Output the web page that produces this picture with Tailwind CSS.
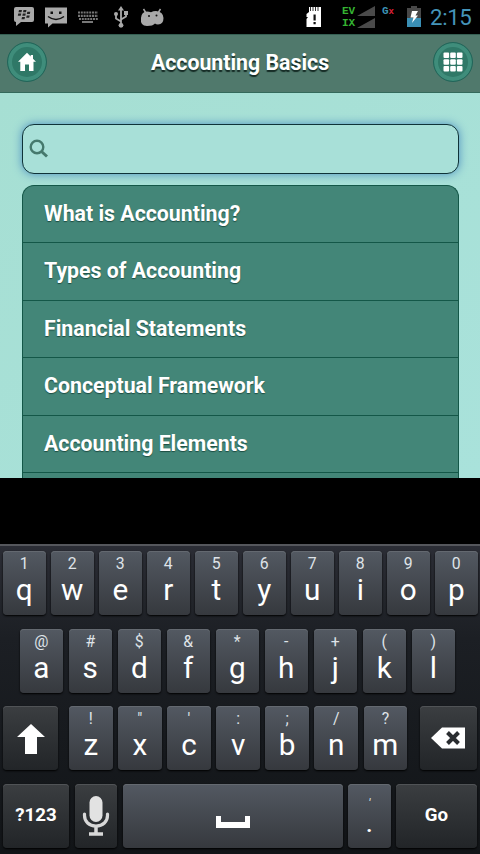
<!DOCTYPE html>
<html lang="en">
<head>
<meta charset="utf-8">
<title>Accounting Basics</title>
<script src="https://cdn.jsdelivr.net/npm/@tailwindcss/browser@4"></script>
</head>
<body class="w-[480px] h-[854px] overflow-hidden bg-black font-['Roboto','Liberation_Sans',sans-serif] text-white flex flex-col">

<!-- Status bar -->
<div class="h-[34px] shrink-0 flex items-center justify-between pl-[13px] pr-[8px]">
  <div class="flex items-center text-[#a9a9a9]">
    <svg class="w-[22px] h-[22px]" viewBox="0 0 22 22"><path fill="currentColor" d="M3 1h16q2 0 2 2v11q0 2-2 2H8l-5 4v-4q-2 0-2-2V3q0-2 2-2z"/><g fill="#222"><path d="M6 4h3l-.5 2.200H5.500zM10.500 4h3l-.5 2.200H10zM5.300 7.500h3l-.5 2.200H4.800zM9.800 7.500h3l-.5 2.200H9.300zM14.300 5.700h3l-.5 2.200h-3zM13.700 9.500h3l-.5 2.200h-3zM9 11h3l-.5 2.200H8.500z"/></g></svg>
    <svg class="ml-[9px] w-[24px] h-[22px]" viewBox="0 0 24 22"><path fill="currentColor" d="M1 1.500h22v16H8.500l-4.500 4v-4H1z"/><g fill="#111"><rect x="6.500" y="5.500" width="2.500" height="2.500"/><rect x="15" y="5.500" width="2.500" height="2.500"/></g><path d="M4 10.500q8 6 16 0" fill="none" stroke="#111" stroke-width="1.500"/></svg>
    <svg class="ml-[9px] w-[22px] h-[14px]" viewBox="0 0 22 14"><path d="M1 2.500h20M1 5.800h20M2 9h19" stroke="currentColor" stroke-width="2.200" stroke-dasharray="2 .8" opacity=".7"/><path d="M5 12h11" stroke="currentColor" stroke-width="1.800" opacity=".8"/></svg>
    <svg class="ml-[14px] w-[16px] h-[22px]" viewBox="0 0 16 22" fill="none" stroke="currentColor" stroke-width="1.800"><path d="M8 3v16M8 15.500l-5-3V8M8 13.500l5-3V7"/><path fill="currentColor" stroke="none" d="M8 0l3 4.500H5z"/><circle cx="8" cy="19.300" r="2.400" fill="currentColor" stroke="none"/><circle cx="3" cy="8" r="2" fill="currentColor" stroke="none"/><path fill="currentColor" stroke="none" d="M11 5h4v4h-4z"/></svg>
    <svg class="ml-[11px] w-[24px] h-[19px]" viewBox="0 0 24 19"><path d="M3.500 1l2.500 4M20.500 1L18 5" stroke="currentColor" stroke-width="1.500"/><path fill="currentColor" d="M1 10Q1.500 3.500 7 3.500q2 0 4 .8Q13 3 16 3q7 .5 7.500 7 0 6-5.500 6.500-2 0-3-1Q13 18 7 18 0 18 1 10z"/><circle cx="9" cy="8" r="1" fill="#111"/><circle cx="16.500" cy="7.500" r="1" fill="#111"/></svg>
  </div>
  <div class="flex items-center">
    <svg class="w-[16px] h-[22px]" viewBox="0 0 16 22"><path fill="#fff" d="M3 1h12v20H.500v-8L2 11H.500V8L3 6z"/><path d="M4.500 1v4M7 1v4M9.500 1v4M12 1v4" stroke="#333" stroke-width="1"/><path d="M7.500 8.500h2.200v6H7.500zM7.500 16h2.200v2.300H7.500z" fill="#111"/></svg>
    <div class="ml-[20px] w-[13px] text-[11px] leading-[12px] font-bold text-[#35b432] text-right font-['Liberation_Mono',monospace]">EV<br>IX</div>
    <svg class="ml-[2px] w-[19px] h-[24px]" viewBox="0 0 19 24"><path fill="#4a4a4a" d="M18 1v10H0zM18 13v10H0z"/></svg>
    <div class="ml-[6px] mb-[12px] w-[13px] text-[11px] leading-[10px] font-bold text-[#3c92b5] whitespace-nowrap font-['Liberation_Mono',monospace]">G<span class="text-[9px] text-[#e0203a]">x</span></div>
    <svg class="ml-[11px] w-[16px] h-[22px]" viewBox="0 0 16 22"><path fill="#484848" d="M5 0h6v2h4v10H1V2h4z"/><path fill="#3a8fb5" d="M1 12h14v9H1z"/><path fill="#fff" d="M6 5h6l-2.500 4.500H12L6 17l1.500-5.500H4.500z"/></svg>
    <div class="ml-[8px] w-[42px] text-[22.300px] leading-[34px] text-[#4594b8] tracking-[-0.400px] whitespace-nowrap">2:15</div>
  </div>
</div>

<!-- App header -->
<header class="h-[59px] shrink-0 bg-[#50796c] border-t border-b border-t-[#355f53] border-b-[#34695b] flex items-center justify-between px-[7px] pb-[3px]">
  <div class="w-[40px] h-[40px] rounded-full bg-[#2f7867] border-[1.500px] border-[#22665a] shadow-[inset_0_0_0_4px_#3f8d7b] flex items-center justify-center">
    <svg class="w-[20px] h-[20px]" viewBox="0 0 20 20" fill="#fff"><path d="M10 .8L1 9.700h2.300V19H8v-6.500h4V19h4.500V9.700H19L16 6.700V3h-2.300v1.500z"/></svg>
  </div>
  <h1 class="pt-[2px] text-[21.300px] font-bold whitespace-nowrap [text-shadow:0_2px_1px_#152b25]">Accounting Basics</h1>
  <div class="w-[40px] h-[40px] rounded-full bg-[#2f7867] border-[1.500px] border-[#22665a] shadow-[inset_0_0_0_4px_#3f8d7b] flex items-center justify-center">
    <svg class="w-[20px] h-[20px]" viewBox="0 0 20 20" fill="#fff"><rect x=".5" y=".5" width="5.600" height="5.600" rx="1"/><rect x="7.200" y=".5" width="5.600" height="5.600" rx="1"/><rect x="13.900" y=".5" width="5.600" height="5.600" rx="1"/><rect x=".5" y="7.200" width="5.600" height="5.600" rx="1"/><rect x="7.200" y="7.200" width="5.600" height="5.600" rx="1"/><rect x="13.900" y="7.200" width="5.600" height="5.600" rx="1"/><rect x=".5" y="13.900" width="5.600" height="5.600" rx="1"/><rect x="7.200" y="13.900" width="5.600" height="5.600" rx="1"/><rect x="13.900" y="13.900" width="5.600" height="5.600" rx="1"/></svg>
  </div>
</header>

<!-- Page content -->
<main class="h-[385px] shrink-0 overflow-hidden bg-linear-to-br from-[#a6dfd3] to-[#a9e2db] pt-[31px] pl-[22px] pr-[21px]">
  <div class="h-[50px] rounded-[12px] border-[1.500px] border-[#0f3338] bg-[#a8e0d8] shadow-[0_0_10px_#4d8fc0] pl-[6px] flex items-center">
    <svg class="w-[20px] h-[20px]" viewBox="0 0 20 20" fill="none" stroke="#45796d" stroke-width="2.400"><circle cx="8" cy="8" r="6.300"/><path d="M12.500 12.500l5.500 5" stroke-width="3"/></svg>
  </div>
  <ul class="mt-[11px] rounded-t-[12px] border border-b-0 border-[#145748] bg-[#438678] text-[21.300px] font-bold [&>li]:h-[57.400px] [&>li]:pl-[21px] [&>li]:leading-[56px] [&>li]:border-b-[1.500px] [&>li]:border-[#145748] [text-shadow:0_1px_1px_#1d4d42]">
    <li>What is Accounting?</li>
    <li>Types of Accounting</li>
    <li>Financial Statements</li>
    <li>Conceptual Framework</li>
    <li>Accounting Elements</li>
    <li></li>
  </ul>
</main>

<!-- Keyboard -->
<section class="mt-[66px] h-[310px] shrink-0 border-t-2 border-[#55575c] bg-linear-to-b from-[#2b2d35] via-[#1c1f24] via-30% to-[#111417] pt-[5px] flex flex-col gap-[13.500px]">
  <div id="row1" class="h-[64px] shrink-0 pl-[3px] flex gap-[5.500px]"></div>
  <div id="row2" class="h-[64px] shrink-0 pl-[19.500px] flex gap-[5.500px]"></div>
  <div class="h-[64px] shrink-0 pl-[3px] flex">
    <div class="w-[55px] rounded-[4px] bg-linear-to-b from-[#3b3e41] to-[#222528] shadow-[0_1px_2px_#000,inset_0_1px_0_#505356] flex items-center justify-center">
      <svg class="w-[28px] h-[30px] mt-[2px]" viewBox="0 0 28 30" fill="#fff"><path d="M14 0l14 13h-8v17H8V13H0z"/></svg>
    </div>
    <div id="row3" class="ml-[11px] flex gap-[5.500px]"></div>
    <div class="ml-[12.500px] w-[57px] rounded-[4px] bg-linear-to-b from-[#3b3e41] to-[#222528] shadow-[0_1px_2px_#000,inset_0_1px_0_#505356] flex items-center justify-center">
      <svg class="w-[34px] h-[22px]" viewBox="0 0 34 22"><path fill="#fff" d="M11 .500h23v21H11L0 11z"/><path d="M16.500 5.500l11 11M27.500 5.500l-11 11" stroke="#2a2d30" stroke-width="4"/></svg>
    </div>
  </div>
  <div class="h-[64px] shrink-0 pl-[3px] flex gap-[5.500px]">
    <div class="w-[66px] rounded-[4px] bg-linear-to-b from-[#3b3e41] to-[#222528] shadow-[0_1px_2px_#000,inset_0_1px_0_#505356] flex items-center justify-center text-[18.700px] font-bold">?123</div>
    <div class="w-[42.500px] rounded-[4px] bg-linear-to-b from-[#3b3e41] to-[#222528] shadow-[0_1px_2px_#000,inset_0_1px_0_#505356] flex items-center justify-center">
      <svg class="w-[28px] h-[42px]" viewBox="0 0 28 42"><rect x="7.500" y="1" width="13" height="26" rx="6.500" fill="#e2e2e2"/><path d="M2.500 19v1.500c0 6 4.500 10.500 11.500 10.500s11.500-4.500 11.500-10.500V19" fill="none" stroke="#d8d8d8" stroke-width="3.200" stroke-linecap="round"/><path d="M14 31v8M7 39h14" stroke="#d8d8d8" stroke-width="3.500"/></svg>
    </div>
    <div class="w-[220px] rounded-[4px] bg-linear-to-b from-[#535962] to-[#36393e] shadow-[0_1px_2px_#000,inset_0_1px_0_#646970] flex items-center justify-center">
      <svg class="w-[34px] h-[12px] mt-[12px]" viewBox="0 0 34 12"><path fill="#fff" d="M0 0h5v6h24V0h5v12H0z"/></svg>
    </div>
    <div class="w-[42.500px] rounded-[4px] bg-linear-to-b from-[#535962] to-[#36393e] shadow-[0_1px_2px_#000,inset_0_1px_0_#646970] flex flex-col items-center pt-[12px]">
      <span class="h-[16px] text-[13px] leading-[15px] italic text-[#dfe3e8]">'</span><span class="text-[20.700px] leading-[26px] font-bold">.</span>
    </div>
    <div class="w-[81px] rounded-[4px] bg-linear-to-b from-[#3b3e41] to-[#222528] shadow-[0_1px_2px_#000,inset_0_1px_0_#505356] flex items-center justify-center text-[18.700px] font-bold">Go</div>
  </div>
</section>

<script>
  const key = (main, alt, width) => `<div class="h-[64px] shrink-0 rounded-[4px] bg-linear-to-b from-[#535962] to-[#36393e] shadow-[0_1px_2px_#000,inset_0_1px_0_#646970] flex flex-col items-center" style="width:${width}px"><span class="h-[24px] text-[15.800px] leading-[25px] text-[#dfe3e8]">${alt}</span><span class="text-[29.700px] leading-[29px]">${main}</span></div>`;
  const fill = (id, letters, alts, width) => {
    document.getElementById(id).innerHTML = [...letters].map((c, i) => key(c, alts[i], width)).join('');
  };
  fill('row1', 'qwertyuiop', [...'1234567890'], 42.5);
  fill('row2', 'asdfghjkl', ['@', '#', '$', '&amp;', '*', '-', '+', '(', ')'], 43.5);
  fill('row3', 'zxcvbnm', ['!', '"', "'", ':', ';', '/', '?'], 43.6);
</script>
</body>
</html>
